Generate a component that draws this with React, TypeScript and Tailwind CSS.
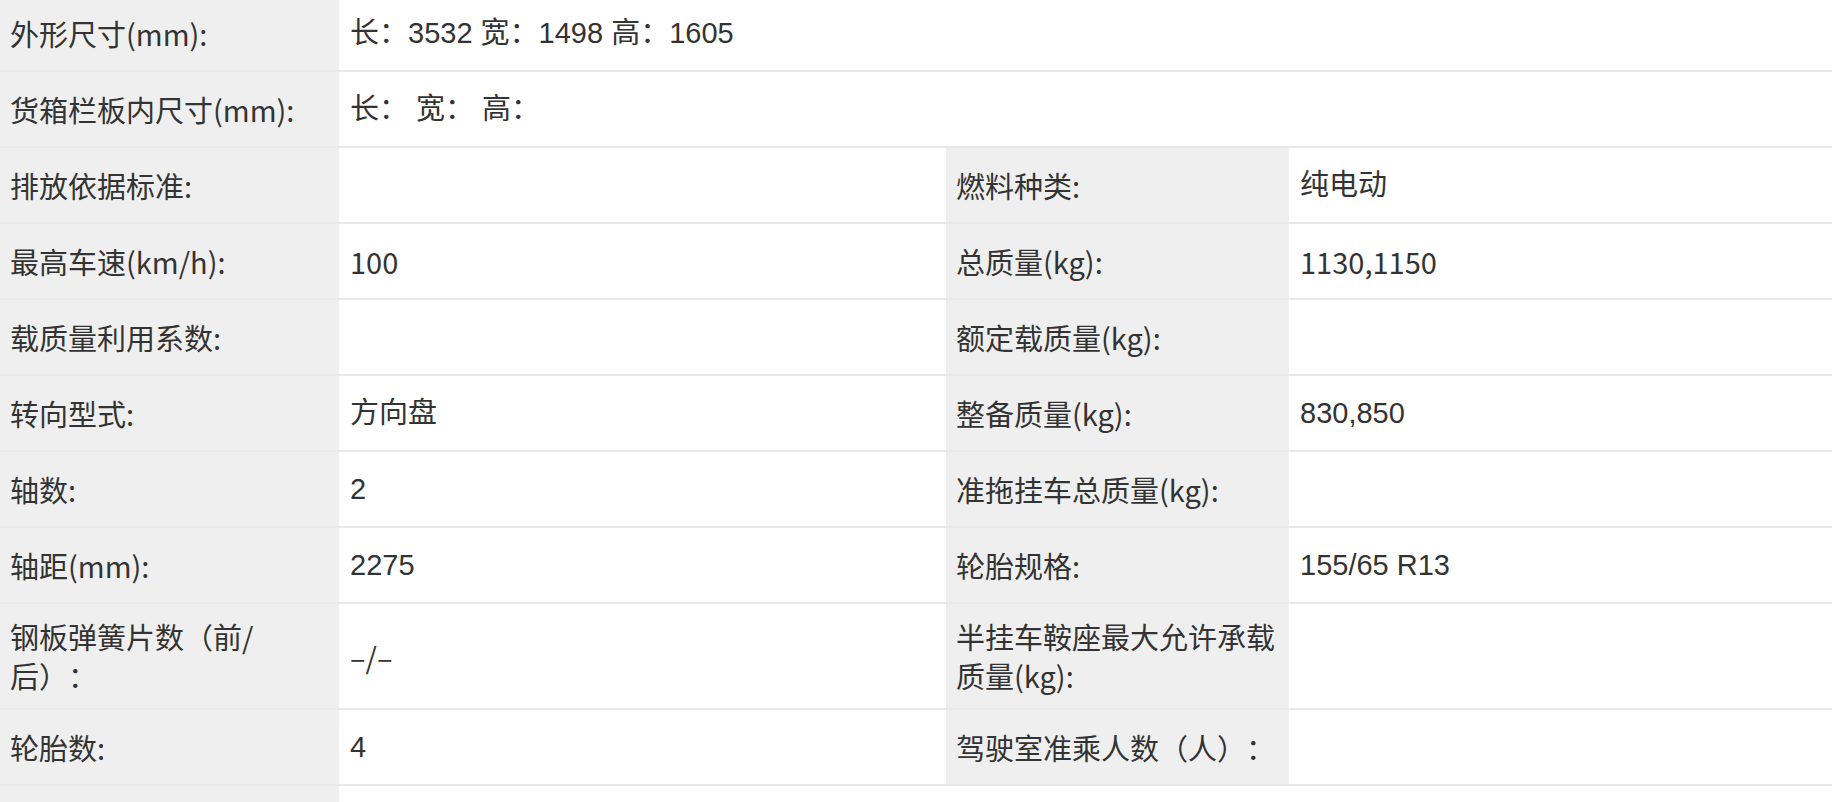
type Row =
  | { kind: "wide"; label: string; value: string }
  | { kind: "pair"; label: string; value: string; label2: string; value2: string; cond?: boolean; cond2?: boolean };

const rows: Row[] = [
  { kind: "wide", label: "外形尺寸(mm):", value: "长：3532 宽：1498 高：1605" },
  { kind: "wide", label: "货箱栏板内尺寸(mm):", value: "长： 宽： 高：" },
  { kind: "pair", label: "排放依据标准:", value: "", label2: "燃料种类:", value2: "纯电动" },
  { kind: "pair", label: "最高车速(km/h):", value: "100", cond: true, label2: "总质量(kg):", value2: "1130,1150", cond2: true },
  { kind: "pair", label: "载质量利用系数:", value: "", label2: "额定载质量(kg):", value2: "" },
  { kind: "pair", label: "转向型式:", value: "方向盘", label2: "整备质量(kg):", value2: "830,850" },
  { kind: "pair", label: "轴数:", value: "2", label2: "准拖挂车总质量(kg):", value2: "" },
  { kind: "pair", label: "轴距(mm):", value: "2275", label2: "轮胎规格:", value2: "155/65 R13" },
  { kind: "pair", label: "钢板弹簧片数（前/后）：", value: "–/–", cond: true, label2: "半挂车鞍座最大允许承载质量(kg):", value2: "" },
  { kind: "pair", label: "轮胎数:", value: "4", label2: "驾驶室准乘人数（人）：", value2: "" },
  { kind: "wide", label: "", value: "" },
];

const cell = "flex items-center min-h-[74px] py-[13px] leading-[39px] [text-spacing-trim:space-all]";
const labelCls = `${cell} bg-[#efefef] pl-[10px] pr-[10px] font-['Noto_Sans_CJK_SC',sans-serif]`;
const valueSans = `${cell} bg-white pl-[11px] pr-[10px] font-['Liberation_Sans','Noto_Sans_CJK_SC',sans-serif]`;
const valueCond = `${cell} bg-white pl-[11px] pr-[10px] font-['Noto_Sans_CJK_SC',sans-serif]`;

export default function App() {
  return (
    <div className="w-[1832px] h-[802px] overflow-hidden bg-white text-[29px] text-[#333333]">
      <div className="-mt-[4px] flex flex-col">
        {rows.map((r, i) =>
          r.kind === "wide" ? (
            <div key={i} className="grid grid-cols-[339px_1fr] border-b-2 border-[#e8e8e8]">
              <div className={labelCls}>{r.label}</div>
              <div className={valueSans}>{r.value}</div>
            </div>
          ) : (
            <div key={i} className="grid grid-cols-[339px_607px_343px_1fr] border-b-2 border-[#e8e8e8]">
              <div className={labelCls}>{r.label}</div>
              <div className={r.cond ? valueCond : valueSans}>{r.value}</div>
              <div className={labelCls}>{r.label2}</div>
              <div className={r.cond2 ? valueCond : valueSans}>{r.value2}</div>
            </div>
          )
        )}
      </div>
    </div>
  );
}
